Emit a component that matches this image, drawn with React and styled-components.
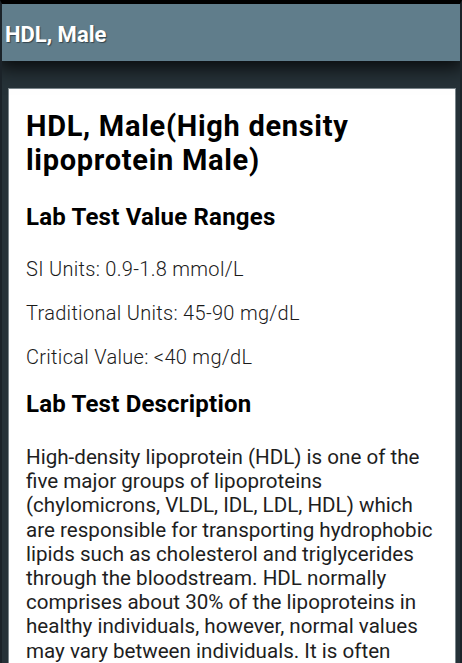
import React from "react";
import styled, { createGlobalStyle } from "styled-components";

const GlobalStyle = createGlobalStyle`
  html, body {
    margin: 0;
    padding: 0;
    background-color: #1b2329;
    overflow: hidden;
  }
  * {
    box-sizing: border-box;
  }
`;

const Screen = styled.div`
  height: 663px;
  display: flex;
  flex-direction: column;
  border-top: 4px solid #000;
  border-left: 2px solid #1b2329;
  border-right: 2px solid #1b2329;
  background-color: #263238;
  font-family: Roboto, "Liberation Sans", sans-serif;
  overflow: hidden;
`;

const Toolbar = styled.header`
  height: 57px;
  flex-shrink: 0;
  display: flex;
  align-items: center;
  padding: 3px 0 0 3px;
  background-color: #607d8b;
  color: #fff;
  font-size: 22px;
  font-weight: 700;
  text-shadow: 1px 1px 1px rgba(0, 0, 0, 0.45);
  position: relative;
  z-index: 1;
  box-shadow: 0 3px 18px 4px rgba(0, 0, 0, 0.8);
`;

const Content = styled.main`
  flex: 1;
  padding: 28px 5px 0 7px;
`;

const Card = styled.section`
  background-color: #fff;
  height: 100%;
  padding: 20px 17px 0 17px;
  box-shadow: 0 0 0 1px rgba(180, 190, 195, 0.6);
`;

const Title = styled.h1`
  margin: 0;
  font-size: 29px;
  line-height: 34px;
  letter-spacing: 0.7px;
  font-weight: 700;
  color: #000;
`;

const SectionTitle = styled.h2`
  margin: ${(p) => p.top}px 0 0;
  font-size: 24px;
  line-height: 28px;
  letter-spacing: 0.2px;
  font-weight: 700;
  color: #000;
`;

const Range = styled.p`
  margin: ${(p) => p.top}px 0 0;
  font-size: 20px;
  line-height: 28px;
  letter-spacing: 0.3px;
  font-weight: 300;
  color: #1a1a1a;
`;

const Description = styled.p`
  margin: 27px 0 0;
  font-size: 20.6px;
  line-height: 24.2px;
  color: #1e1e1e;
`;

const ranges = [
  "SI Units: 0.9-1.8 mmol/L",
  "Traditional Units: 45-90 mg/dL",
  "Critical Value: <40 mg/dL",
];

const App = () => {
  return (
    <>
      <GlobalStyle />
      <Screen>
        <Toolbar>HDL, Male</Toolbar>
        <Content>
          <Card>
            <Title>HDL, Male(High density lipoprotein Male)</Title>
            <SectionTitle top={26}>Lab Test Value Ranges</SectionTitle>
            {ranges.map((r, i) => (
              <Range key={i} top={i === 0 ? 24 : 16}>
                {r}
              </Range>
            ))}
            <SectionTitle top={19}>Lab Test Description</SectionTitle>
            <Description>
              High-density lipoprotein (HDL) is one of the five major groups of
              lipoproteins (chylomicrons, VLDL, IDL, LDL, HDL) which are
              responsible for transporting hydrophobic lipids such as
              cholesterol and triglycerides through the bloodstream. HDL
              normally comprises about 30% of the lipoproteins in healthy
              individuals, however, normal values may vary between individuals.
              It is often
            </Description>
          </Card>
        </Content>
      </Screen>
    </>
  );
};

export default App;
